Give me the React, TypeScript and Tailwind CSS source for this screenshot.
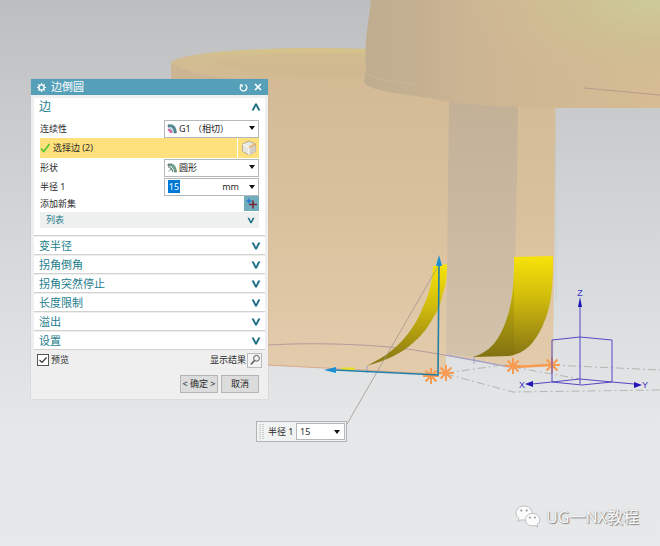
import React, { useState } from "react";

const SECTIONS = ["变半径", "拐角倒角", "拐角突然停止", "长度限制", "溢出", "设置"];

function Chevron({ up = false, small = false }: { up?: boolean; small?: boolean }) {
  return (
    <svg viewBox="0 0 10 8" className={small ? "h-[7px] w-2" : "h-2 w-[10px]"} aria-hidden="true">
      <path
        d={up ? "M0.6 7.4 4.2 0.6h1.6L9.4 7.4H7.2L5 3 2.8 7.4z" : "M0.6 0.6 4.2 7.4h1.6L9.4 0.6H7.2L5 5 2.8 0.6z"}
        fill="#1d6f86"
      />
    </svg>
  );
}

function Caret() {
  return (
    <svg viewBox="0 0 6 4" className="h-1 w-[6px]" aria-hidden="true">
      <path d="M0 0h6L3 4z" fill="#111" />
    </svg>
  );
}

function TangentIcon() {
  return (
    <svg viewBox="0 0 10 10" className="size-[10px]" aria-hidden="true">
      <path d="M1 .8h3.2C7.4 1 9.2 4 9.4 9H7.2C7 5.400 5.500 3 3 2.800H1z" fill="#4e8f9b" stroke="#3d5961" strokeWidth=".5" />
      <path d="M1 3.600c3 .2 4.600 2 5 5.400" fill="none" stroke="#7bb9c4" strokeWidth="1" />
      <path d="M.8 4.800l1.900.2 2.200 1.200v2.800H2.600V7.500L.8 6.800z" fill="#d765a4" />
    </svg>
  );
}

function CircleIcon() {
  return (
    <svg viewBox="0 0 10 10" className="size-[10px]" aria-hidden="true">
      <path d="M1 1h3c3.300.2 5 3.200 5.400 8H7.600C7.200 5 5.500 3 3 2.800H1z" fill="#78b5a4" stroke="#3d5d58" strokeWidth=".7" />
      <path d="M1 4c2.600 0 4.400 1.800 4.800 5" fill="none" stroke="#355a57" strokeWidth=".8" />
      <path d="M1.600 8.600 6 4.200M3 5.200l2.200 2.400" stroke="#475" strokeWidth=".8" />
    </svg>
  );
}

function DropDown({ id, label, icon, options }: { id: string; label: string; icon: React.ReactNode; options: string[] }) {
  return (
    <div className="flex h-[19px] items-center justify-between">
      <label htmlFor={id}>{label}</label>
      <div className="relative h-[18px] w-[95px]">
        <select
          id={id}
          className="block h-full w-full appearance-none border border-[#b4b8ba] bg-white pr-3 pl-[14px] leading-4 text-[#222] outline-none"
        >
          {options.map((o) => (
            <option key={o}>{o}</option>
          ))}
        </select>
        <span className="pointer-events-none absolute top-1 left-[3px]">{icon}</span>
        <span className="pointer-events-none absolute top-[6px] right-1 flex">
          <Caret />
        </span>
      </div>
    </div>
  );
}

function Star({ x, y }: { x: number; y: number }) {
  return (
    <path
      transform={`translate(${x} ${y})`}
      d="M-8 0H8M0-8V8M-5.500-5.500 5.500 5.500M-5.500 5.500 5.500-5.500"
      stroke="#f89a4f"
      strokeWidth="2"
    />
  );
}

function Scene() {
  return (
    <svg
      viewBox="0 0 660 546"
      preserveAspectRatio="xMinYMin slice"
      className="absolute inset-0 h-full w-full"
      role="img"
      aria-label="模型视图"
    >
      <defs>
        <linearGradient id="sky" x1="0" y1="0" x2="0" y2="1">
          <stop offset="0" stopColor="#bcbec0" />
          <stop offset=".2" stopColor="#c8cacc" />
          <stop offset=".55" stopColor="#dadddf" />
          <stop offset=".78" stopColor="#e5e7e8" />
          <stop offset="1" stopColor="#e6e8e9" />
        </linearGradient>
        <linearGradient id="wall" x1="0" y1="0" x2="0" y2="1">
          <stop offset="0" stopColor="#d2b994" />
          <stop offset=".5" stopColor="#dac19d" />
          <stop offset="1" stopColor="#e3ccad" />
        </linearGradient>
        <linearGradient id="rim" x1="0" y1="0" x2="0" y2="1">
          <stop offset="0" stopColor="#d6c488" />
          <stop offset=".25" stopColor="#d2bd92" />
          <stop offset="1" stopColor="#d1b993" />
        </linearGradient>
        <linearGradient id="column" x1="0" y1="0" x2="0" y2="1">
          <stop offset="0" stopColor="#c2b097" />
          <stop offset="1" stopColor="#d3c3aa" />
        </linearGradient>
        <linearGradient id="head" x1="0" y1="0" x2="1" y2="0">
          <stop offset="0" stopColor="#c0ad90" />
          <stop offset=".2" stopColor="#c4b091" />
          <stop offset=".35" stopColor="#ccb593" />
          <stop offset="1" stopColor="#d5bc94" />
        </linearGradient>
        <radialGradient id="gloss" gradientUnits="userSpaceOnUse" cx="650" cy="0" r="200" gradientTransform="matrix(1 0 0 .45 0 0)">
          <stop offset="0" stopColor="#cdca98" />
          <stop offset=".5" stopColor="#cdc092" stopOpacity=".7" />
          <stop offset="1" stopColor="#d2b993" stopOpacity="0" />
        </radialGradient>
        <linearGradient id="fillet" x1="0" y1="0" x2="0" y2="1">
          <stop offset="0" stopColor="#f7e30a" />
          <stop offset=".4" stopColor="#d2bd0c" />
          <stop offset="1" stopColor="#867414" />
        </linearGradient>
      </defs>

      <rect width="660" height="546" fill="url(#sky)" />

      {/* base cylinder */}
      <path d="M171 62C185 52 260 46 370 49L556 100 553 366 517 368 446 355V375L268 365H171z" fill="url(#wall)" />
      <path d="M171 62C185 52 260 46 370 49V82C290 84 190 76 171 62z" fill="url(#rim)" />
      <path d="M215 62C250 52 320 52 370 55V76C300 78 230 72 215 62z" fill="#cfb58f" opacity=".4" />
      <path d="M171 62C190 76 290 80 370 82" fill="none" stroke="#d3bf92" />
      <path d="M171 63C190 74 220 78 240 79H171z" fill="#ccb593" />

      {/* column */}
      <path d="M449 100H518C517 180 516 260 513 300 508 330 496 352 474 357L446 354z" fill="url(#column)" />

      {/* upper body */}
      <path d="M371 0H660V108H556C500 107 450 104 430 98 400 94 366 90 364 82L366 70C364 45 368 25 371 0z" fill="url(#head)" />
      <path d="M371 0H660V108H430z" fill="url(#gloss)" />
      <path d="M366 74C380 81 400 83 418 84" fill="none" stroke="#cbb797" />
      <path d="M584 88 660 95" stroke="#b99a8c" />
      <path d="M556 108V300" stroke="#c6cdcf" />

      {/* lower edge lines */}
      <path d="M268 345C320 342 370 345 400 348 430 352 460 358 510 367" fill="none" stroke="#b59a9c" />
      <path d="M446 355 474 360 508 367" fill="none" stroke="#9b9fd8" />
      <path d="M268 365 436 374" stroke="#d9a98c" />

      {/* construction lines */}
      <g fill="none" stroke="#b4b6b2" strokeDasharray="8 3 2 3">
        <path d="M446 374 513 392 660 390" />
        <path d="M446 373 510 364" />
        <path d="M552 365 660 370" />
        <path d="M513 367 580 379" />
      </g>

      {/* fillet previews */}
      <path d="M433 266 447 264C447 278 446 286 443 293 440 307 437 312 433 318 427 329 421 336 413 343 402 353 388 360 366 366 375 362 394 352 407 335 416 323 420 315 423 307 428 297 432 285 433 266z" fill="url(#fillet)" />
      <path d="M514 257 553 256C553 285 552 305 543 325 535 342 526 354 508 356L473 357C493 351 500 337 506 321 513 302 514 280 514 257z" fill="url(#fillet)" />
      <path d="M514 275V356L473 357C493 351 500 337 506 321 512 304 514 290 514 275z" fill="#756710" opacity=".2" />
      <path d="M367 366V373M474 357V364" stroke="#9a9fcc" />

      {/* drag handles */}
      <path d="M437 268 347 424" stroke="#a3988a" strokeWidth=".8" />
      <path d="M341 369H355" stroke="#e6dc2c" strokeWidth="3" />
      <Star x={431} y={376} />
      <Star x={446} y={373} />
      <path d="M513 367 552 365" stroke="#f89a4f" strokeWidth="2.500" />
      <Star x={513} y={366} />
      <Star x={552} y={365} />
      <path d="M439 264 438 375 335 370" fill="none" stroke="#1f7fa8" strokeWidth="1.600" />
      <path d="M439 255 442 266H436zM324 370 336 367V373z" fill="#1b8fd0" />

      {/* coordinate system */}
      <g fill="none" stroke="#5449c4">
        <path d="M580 384V304" />
        <path d="M552 382V340L580 337 612 340V382L582 385 552 382 580 379 612 382" />
        <path d="M552 382 532 384M612 382 634 384" />
      </g>
      <path d="M580 297 582 307H578zM525 384 533 381V387zM642 385 634 382V388z" fill="#2116b8" />
      <g fill="#3b30c0" fontFamily="'Liberation Sans', Arial, sans-serif" fontSize="9" textAnchor="middle">
        <text x="580" y="296">Z</text>
        <text x="522" y="388">X</text>
        <text x="645" y="388">Y</text>
      </g>
    </svg>
  );
}

function EdgeBlendDialog() {
  const [preview, setPreview] = useState(true);
  return (
    <section
      aria-label="边倒圆"
      className="absolute top-[79px] left-[31px] w-[237px] bg-[#efefef] pb-[6px] text-[9px] leading-3 text-[#2b2b2b] shadow-[0_0_1px_#aaa]"
    >
      <header className="flex h-4 items-center bg-[#559fb8] px-[6px] text-white">
        <svg viewBox="0 0 10 10" className="size-[9px]" aria-hidden="true">
          <circle cx="5" cy="5" r="2.900" fill="none" stroke="#fff" strokeWidth="1.500" />
          <path d="M5 0v2M5 8v2M0 5h2M8 5h2M1.500 1.500l1.300 1.300M7.200 7.200l1.300 1.300M8.500 1.500 7.200 2.800M2.800 7.200 1.500 8.500" stroke="#fff" strokeWidth="1.300" />
        </svg>
        <h1 className="ml-[5px] flex-1 text-[11px] leading-4">边倒圆</h1>
        <button aria-label="重置" className="mr-[6px]">
          <svg viewBox="0 0 10 10" className="size-[9px]" aria-hidden="true">
            <path d="M6.500 1.700A3.700 3.700 0 1 1 2 3" fill="none" stroke="#fff" strokeWidth="1.400" />
            <path d="M.5 1.500h3.500V5z" fill="#fff" />
          </svg>
        </button>
        <button aria-label="关闭">
          <svg viewBox="0 0 8 8" className="size-2" aria-hidden="true">
            <path d="M1 1l6 6M7 1 1 7" stroke="#fff" strokeWidth="1.700" />
          </svg>
        </button>
      </header>

      <div className="px-[3px] pt-[3px]">
        <div className="border-b border-[#d2d2d2] bg-white pb-[7px]">
          <button className="flex h-[17px] w-full items-center justify-between pr-1 pl-[5px] text-[12px] text-[#1c7d8c]" aria-expanded="true">
            边
            <Chevron up />
          </button>
          <div className="px-[6px] pt-1">
            <DropDown id="continuity" label="连续性" icon={<TangentIcon />} options={["G1 （相切）", "G2 （曲率）"]} />
            <div className="flex h-5 gap-px">
              <div className="flex flex-1 items-center bg-[#fee07c]">
                <svg viewBox="0 0 10 10" className="mr-[3px] size-[10px]" aria-hidden="true">
                  <path d="M1 5.500 3.700 8.500 9.500 1" fill="none" stroke="#4fc42e" strokeWidth="1.600" />
                </svg>
                选择边 (2)
              </div>
              <button aria-label="选择意图" className="flex w-[21px] items-center justify-center bg-[#fee07c]">
                <svg viewBox="0 0 16 16" className="size-4" aria-hidden="true">
                  <path d="M8 1 14.500 4v7.500L8 15 1.500 11.500V4z" fill="#e9e6e0" stroke="#aaa08c" strokeWidth=".8" />
                  <path d="M8 7.500 14.500 4v7.500L8 15z" fill="#d3cfc8" />
                  <path d="M1.500 4 8 7.500V15" fill="none" stroke="#fff" />
                  <path d="M8 7.500 14.500 4" stroke="#eca24c" strokeWidth="1.300" />
                </svg>
              </button>
            </div>
            <DropDown id="shape" label="形状" icon={<CircleIcon />} options={["圆形", "圆锥"]} />
            <div className="flex h-[19px] items-center justify-between">
              <label htmlFor="radius">半径 1</label>
              <div className="flex h-[18px] w-[95px] items-center border border-[#b4b8ba] bg-white pr-[3px] pl-[3px]">
                <input
                  id="radius"
                  defaultValue="15"
                  className="h-[13px] w-3 bg-[#0078d7] text-center text-white outline-none"
                />
                <button className="ml-auto flex items-center gap-[10px]" aria-label="单位">
                  <span>mm</span>
                  <Caret />
                </button>
              </div>
            </div>
            <div className="flex h-[15px] items-center justify-between">
              <span>添加新集</span>
              <button aria-label="添加新集" className="flex size-[15px] items-center justify-center bg-[#70adbd]">
                <svg viewBox="0 0 12 12" className="size-3" aria-hidden="true">
                  <path d="M3 .5v5M.5 3h5" stroke="#2376d2" strokeWidth="1.300" />
                  <path d="M7 2.500v8M3 6.500h8" stroke="#7b2430" strokeWidth="1.600" />
                </svg>
              </button>
            </div>
            <button className="mt-px flex h-4 w-full items-center justify-between bg-[#eff0f0] pr-1 pl-[6px] text-[#1c7d8c]" aria-expanded="false">
              列表
              <Chevron small />
            </button>
          </div>
        </div>

        {SECTIONS.map((name) => (
          <button
            key={name}
            aria-expanded="false"
            className="mt-px flex h-[18px] w-full items-center justify-between border-b border-[#d2d2d2] bg-white pr-1 pl-[5px] text-[11px] leading-4 text-[#1c7d8c]"
          >
            {name}
            <Chevron />
          </button>
        ))}
      </div>

      <div className="flex h-5 items-center justify-between px-[6px]">
        <label className="flex items-center gap-[2px]">
          <input
            type="checkbox"
            checked={preview}
            onChange={(e) => setPreview(e.target.checked)}
            className="peer sr-only"
          />
          <svg viewBox="0 0 12 12" className="size-3" aria-hidden="true">
            <rect x=".5" y=".5" width="11" height="11" fill="#fff" stroke="#555" />
            {preview && <path d="M2.500 6 5 8.500 9.500 3.500" fill="none" stroke="#333" strokeWidth="1.200" />}
          </svg>
          预览
        </label>
        <button className="flex items-center gap-px">
          显示结果
          <span className="flex size-[15px] items-center justify-center border border-[#bbb] bg-[#f4f4f4]">
            <svg viewBox="0 0 12 12" className="size-3" aria-hidden="true">
              <circle cx="7.500" cy="4.300" r="2.900" fill="none" stroke="#555" />
              <path d="M5.500 6.500 1.800 10.500" stroke="#555" strokeWidth="1.400" />
            </svg>
          </span>
        </button>
      </div>
      <div className="mt-[5px] flex justify-end gap-[3px] pr-[9px]">
        <button className="h-[18px] w-[38px] border border-[#b5b5b5] bg-[#dcdcdc] whitespace-nowrap">&lt; 确定 &gt;</button>
        <button className="h-[18px] w-[38px] border border-[#b5b5b5] bg-[#dcdcdc]">取消</button>
      </div>
    </section>
  );
}

export default function App() {
  return (
    <main className="relative min-h-screen w-full overflow-hidden bg-[#e6e8e9] font-['Noto_Sans','Noto_Sans_CJK_SC',sans-serif]" lang="zh-CN">
      <Scene />
      <EdgeBlendDialog />

      <div className="absolute top-[421px] left-[256px] flex h-[21px] w-[91px] items-center border border-[#b0b2b3] bg-[#f1f2f2] pr-px pl-[2px] text-[9px] leading-3 text-[#2b2b2b]">
        <svg viewBox="0 0 5 16" className="mr-1 h-4 w-[5px]" aria-hidden="true">
          <path d="M1 0v16M4 0v16" stroke="#a5a5a5" strokeDasharray="1 1" />
        </svg>
        <label htmlFor="float-radius" className="whitespace-nowrap">半径 1</label>
        <div className="ml-auto flex h-[17px] w-[49px] items-center border border-[#b4b8ba] bg-white pr-1 pl-[3px]">
          <input id="float-radius" defaultValue="15" className="w-full min-w-0 flex-1 outline-none" />
          <Caret />
        </div>
      </div>

      <footer className="absolute right-[21px] bottom-[17px] flex items-center gap-[5px]">
        <svg viewBox="0 0 26 24" className="h-6 w-[26px]" aria-hidden="true">
          <g fill="#fbfbfb" stroke="#adb0b2" strokeWidth=".8">
            <path d="M9 1C4.500 1 1 4 1 8c0 2.300 1.200 4.200 3 5.500L3 16.500l3.500-1.700c.8.200 1.600.3 2.500.3 4.500 0 8-3.100 8-7.100S13.500 1 9 1z" />
            <path d="M17.500 8.500c-4 0-7.200 2.700-7.200 6.200s3.200 6.200 7.200 6.200c.8 0 1.600-.1 2.300-.3l3 1.600-.8-2.700c1.700-1.200 2.700-2.900 2.700-4.800 0-3.500-3.200-6.200-7.200-6.200z" />
          </g>
          <g fill="#8d9092">
            <circle cx="6.300" cy="5.500" r="1" />
            <circle cx="11.700" cy="5.500" r="1" />
            <circle cx="15" cy="12.500" r=".9" />
            <circle cx="20" cy="12.500" r=".9" />
          </g>
        </svg>
        <span className="text-base leading-6 text-[#f8f8f8] [text-shadow:1px_1px_1px_#888,0_0_1px_#999]">UG一NX教程</span>
      </footer>
    </main>
  );
}
